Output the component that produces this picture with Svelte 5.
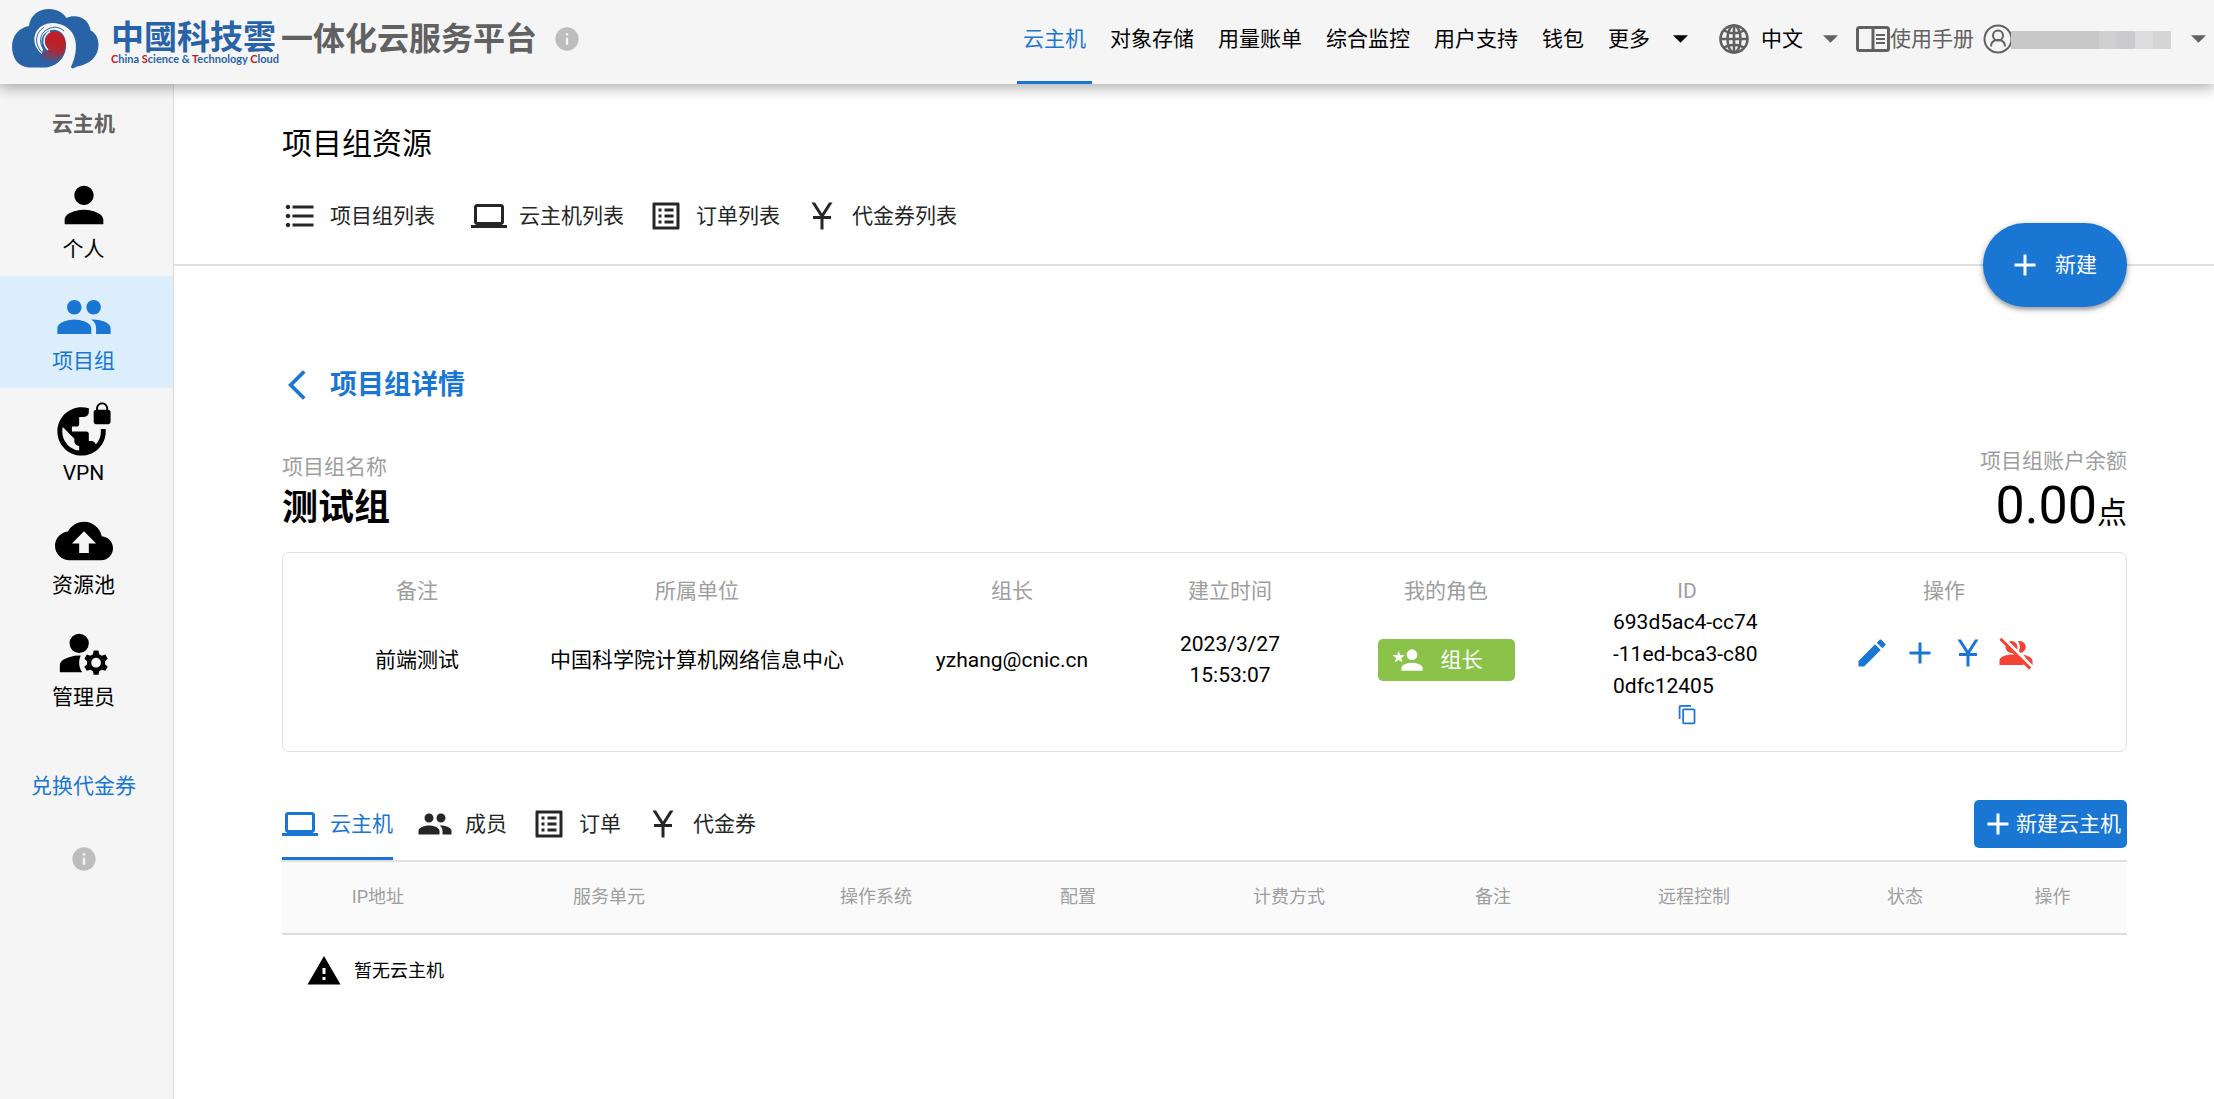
<script>
  const icons = {
    person: 'M12 12c2.21 0 4-1.79 4-4s-1.79-4-4-4-4 1.79-4 4 1.79 4 4 4zm0 2c-2.67 0-8 1.34-8 4v2h16v-2c0-2.66-5.33-4-8-4z',
    people: 'M16 11c1.66 0 2.99-1.34 2.99-3S17.66 5 16 5c-1.66 0-3 1.34-3 3s1.34 3 3 3zm-8 0c1.66 0 2.99-1.34 2.99-3S9.66 5 8 5C6.34 5 5 6.34 5 8s1.34 3 3 3zm0 2c-2.33 0-7 1.17-7 3.5V19h14v-2.5c0-2.33-4.67-3.5-7-3.5zm8 0c-.29 0-.62.02-.97.05 1.16.84 1.97 1.97 1.97 3.45V19h6v-2.5c0-2.33-4.67-3.5-7-3.5z',
    vpn: 'M22 4v-.5C22 2.12 20.88 1 19.5 1S17 2.12 17 3.5V4c-.55 0-1 .45-1 1v4c0 .55.45 1 1 1h5c.55 0 1-.45 1-1V5c0-.55-.45-1-1-1zm-.8 0h-3.4v-.5c0-.94.76-1.7 1.7-1.7s1.7.76 1.7 1.7V4zm-2.28 8c.04.33.08.66.08 1 0 2.08-.8 3.97-2.1 5.39-.26-.81-1-1.39-1.9-1.39h-1v-3c0-.55-.45-1-1-1H7v-2h2c.55 0 1-.45 1-1V7h2c1.1 0 2-.9 2-2V3.46c-.95-.3-1.95-.46-3-.46C5.48 3 1 7.48 1 13s4.48 10 10 10 10-4.48 10-10c0-.34-.02-.67-.05-1h-2.03zM10 20.93c-3.95-.49-7-3.85-7-7.93 0-.62.08-1.21.21-1.79L8 16v1c0 1.1.9 2 2 2v1.93z',
    backup: 'M19.35 10.04C18.67 6.59 15.64 4 12 4 9.11 4 6.6 5.64 5.35 8.04 2.34 8.36 0 10.91 0 14c0 3.31 2.69 6 6 6h13c2.76 0 5-2.24 5-5 0-2.64-2.05-4.78-4.65-4.96zM14 13v4h-4v-4H7l5-5 5 5h-3z',
    manage: 'M10 4a4 4 0 1 0 0 8 4 4 0 0 0 0-8zM10.67 13.02C10.45 13.01 10.23 13 10 13c-2.42 0-4.68.67-6.61 1.82C2.51 15.34 2 16.32 2 17.35V20h9.26C10.47 18.87 10 17.49 10 16c0-1.07.25-2.07.67-2.98zM20.75 16c0-.22-.03-.42-.06-.63l1.14-1.01-1-1.73-1.45.49c-.32-.27-.68-.48-1.08-.63L18 11h-2l-.3 1.49c-.4.15-.76.36-1.08.63l-1.45-.49-1 1.73 1.14 1.01c-.03.21-.06.41-.06.63s.03.42.06.63l-1.14 1.01 1 1.73 1.45-.49c.32.27.68.48 1.08.63L16 21h2l.3-1.49c.4-.15.76-.36 1.08-.63l1.45.49 1-1.73-1.14-1.01c.03-.21.06-.41.06-.63zM17 18c-1.1 0-2-.9-2-2s.9-2 2-2 2 .9 2 2-.9 2-2 2z',
    info: 'M12 2C6.48 2 2 6.48 2 12s4.48 10 10 10 10-4.48 10-10S17.52 2 12 2zm1 15h-2v-6h2v6zm0-8h-2V7h2v2z',
    list: 'M4 10.5c-.83 0-1.5.67-1.5 1.5s.67 1.5 1.5 1.5 1.5-.67 1.5-1.5-.67-1.5-1.5-1.5zm0-6c-.83 0-1.5.67-1.5 1.5S3.17 7.5 4 7.5 5.5 6.83 5.5 6 4.83 4.5 4 4.5zm0 12c-.83 0-1.5.68-1.5 1.5s.68 1.5 1.5 1.5 1.5-.68 1.5-1.5-.67-1.5-1.5-1.5zM7 19h14v-2H7v2zm0-6h14v-2H7v2zm0-8v2h14V5H7z',
    computer: 'M20 18c1.1 0 1.99-.9 1.99-2L22 6c0-1.1-.9-2-2-2H4c-1.1 0-2 .9-2 2v10c0 1.1.9 2 2 2H0v2h24v-2h-4zM4 6h16v10H4V6z',
    order: 'M19 5v14H5V5h14m1.1-2H3.9c-.5 0-.9.4-.9.9v16.2c0 .4.4.9.9.9h16.2c.4 0 .9-.5.9-.9V3.9c0-.5-.5-.9-.9-.9zM11 7h6v2h-6V7zm0 4h6v2h-6v-2zm0 4h6v2h-6zM7 7h2v2H7zm0 4h2v2H7zm0 4h2v2H7z',
    yuan: 'M13.28 12H18v2h-5v7h-2v-7H6v-2h4.72L5 3h2.37L12 10.29 16.63 3H19l-5.72 9z',
    edit: 'M3 17.25V21h3.75L17.81 9.94l-3.75-3.75L3 17.25zM20.71 7.04c.39-.39.39-1.02 0-1.41l-2.34-2.34c-.39-.39-1.02-.39-1.41 0l-1.83 1.83 3.75 3.75 1.83-1.83z',
    add: 'M19 13h-6v6h-2v-6H5v-2h6V5h2v6h6v2z',
    copy: 'M16 1H4c-1.1 0-2 .9-2 2v14h2V3h12V1zm3 4H8c-1.1 0-2 .9-2 2v14c0 1.1.9 2 2 2h11c1.1 0 2-.9 2-2V7c0-1.1-.9-2-2-2zm0 16H8V7h11v14z',
    warning: 'M1 21h22L12 2 1 21zm12-3h-2v-2h2v2zm0-4h-2v-4h2v4z',
    leader: 'M15 4a4 4 0 1 0 0 8 4 4 0 0 0 0-8zM15 14c-2.67 0-8 1.34-8 4v2h16v-2c0-2.66-5.33-4-8-4zM5 5.2l1.2 3 3.3.2-2.5 2.1.8 3.2L5 12l-2.8 1.7.8-3.2L.5 8.4l3.3-.2z'
  };

  const nav = ['云主机', '对象存储', '用量账单', '综合监控', '用户支持', '钱包'];
  const side = [
    { icon: 'person', label: '个人' },
    { icon: 'people', label: '项目组', active: true },
    { icon: 'vpn', label: 'VPN' },
    { icon: 'backup', label: '资源池' },
    { icon: 'manage', label: '管理员' }
  ];
  const tools = [
    { icon: 'list', label: '项目组列表', wide: true },
    { icon: 'computer', label: '云主机列表' },
    { icon: 'order', label: '订单列表' },
    { icon: 'yuan', label: '代金券列表' }
  ];
  const tabs = [
    { icon: 'computer', label: '云主机' },
    { icon: 'people', label: '成员' },
    { icon: 'order', label: '订单' },
    { icon: 'yuan', label: '代金券' }
  ];
  const detailHeads = ['备注', '所属单位', '组长', '建立时间', '我的角色', 'ID', '操作'];
  const hostHeads = ['IP地址', '服务单元', '操作系统', '配置', '计费方式', '备注', '远程控制', '状态', '操作'];
  let tab = $state('云主机');
</script>

{#snippet icon(name)}
  <svg class="icon" viewBox="0 0 24 24" aria-hidden="true"><path d={icons[name]} /></svg>
{/snippet}

{#snippet caret()}
  <svg class="caret" viewBox="7 10 10 5" aria-hidden="true"><path d="M7 10l5 5 5-5z" /></svg>
{/snippet}

<header>
  <a class="brand" href="#home" aria-label="中国科技云">
    <svg class="cloud" viewBox="0 0 88 60" aria-hidden="true">
      <defs>
        <linearGradient id="core" gradientUnits="userSpaceOnUse" x1="46" y1="34" x2="39" y2="55">
          <stop offset="0" stop-color="#bf1f26" />
          <stop offset="0.4" stop-color="#a52c3c" />
          <stop offset="1" stop-color="#2863a8" />
        </linearGradient>
      </defs>
      <path fill="#2863a8" d="M16 58.5C5 57 0 48 0 37.5C0 26 8 18.500 17 17C18 7 26 0 37 0C45 0 51 3.500 54.500 9C60 6 70 7 74.500 12.500C77 15.500 78.500 19 78.500 21.500C84 24 86.500 30 86.500 36C86.500 47 78 55.500 65 57.500L61 59.500L58 58C50 50 44 58.500 34 58.500Z" />
      <path fill="#f5f5f5" d="M30 45C20 37 20 24 29 17.500C39 11 53 14 60 23.500C66 32 65 46 58.500 59L40 60L35 58.500C48 56 55 46 54 34C53 25 47 20 40 21C31 22 27 31 31 40Z" />
      <path fill="url(#core)" d="M34 29C35 22 45 20 50.500 26C56 33 54 45 46 51C41 56 33 57 27 52C26 48 30 44 35 41C33 37 32.500 33 34 29Z" />
      <g fill="none" stroke="#2863a8" stroke-width="1">
        <path d="M33 46C22 38 22 24 32 18.500" />
        <path d="M34 43C26 36 27 24 36 20C42 17 48 18 52 22" />
      </g>
      <path fill="none" stroke="#f5f5f5" stroke-width="1.500" d="M36 41C30 35 31 26 38 22.500" />
    </svg>
    <span class="words">
      <span class="name">中國科技雲</span>
      <span class="latin"><b>C</b>hina <b>S</b>cience &amp; <b>T</b>echnology <b>C</b>loud</span>
    </span>
  </a>
  <span class="platform">一体化云服务平台</span>
  <button class="info head-info" aria-label="平台信息">{@render icon('info')}</button>

  <nav class="top" aria-label="主导航">
    {#each nav as label, i}
      <a href="#nav{i}" class:current={i === 0}>{label}</a>
    {/each}
    <button class="more" aria-haspopup="menu">更多{@render caret()}</button>
  </nav>

  <label class="lang">
    <svg class="globe" viewBox="0 0 30 30" aria-label="语言">
      <g fill="none" stroke="currentColor" stroke-width="2.600">
        <circle cx="15" cy="15" r="13.500" />
        <ellipse cx="15" cy="15" rx="6.500" ry="13.500" />
        <path d="M15 1.500v27M1.500 15h27M5 6.500c6 3.600 14 3.600 20 0M5 23.500c6-3.600 14-3.600 20 0" />
      </g>
    </svg>
    <select>
      <option>中文</option>
      <option>English</option>
    </select>
    {@render caret()}
  </label>

  <a class="manual" href="#manual">
    <svg class="book" viewBox="0 0 34 26" aria-hidden="true">
      <rect x="1.500" y="1.500" width="31" height="23" rx="2" fill="none" stroke="currentColor" stroke-width="3" />
      <path d="M17 1v24" stroke="currentColor" stroke-width="3" />
      <path d="M20 9h9M20 13h9M20 17h9" stroke="currentColor" stroke-width="2" />
    </svg>使用手册</a>

  <button class="user" aria-haspopup="menu" aria-label="用户">
    <svg class="avatar" viewBox="0 0 30 30" aria-hidden="true">
      <g fill="none" stroke="currentColor" stroke-width="2">
        <circle cx="15" cy="15" r="13.500" />
        <circle cx="15" cy="11.500" r="5" />
        <path d="M8 22.500c0-4.500 2.500-6.500 7-6.500s7 2 7 6.500" />
      </g>
    </svg>
    <span class="mosaic"><i></i><i></i><i></i><i></i><i></i></span>
    {@render caret()}
  </button>
</header>

<div class="body">
  <aside>
    <h2>云主机</h2>
    {#each side as item, i}
      <a class="entry" href="#side{i}" class:current={item.active}>
        {@render icon(item.icon)}
        <span>{item.label}</span>
      </a>
    {/each}
    <a class="redeem" href="#redeem">兑换代金券</a>
    <button class="info" aria-label="帮助">{@render icon('info')}</button>
  </aside>

  <main>
    <section class="resources">
      <h1>项目组资源</h1>
      <div class="tools">
        {#each tools as item, i}
          <a href="#tool{i}" class:wide={item.wide}>{@render icon(item.icon)}{item.label}</a>
        {/each}
      </div>
      <button class="create">{@render icon('add')}新建</button>
    </section>

    <section class="detail">
      <button class="back">
        <svg viewBox="0 0 12 24" aria-hidden="true"><path d="M11.670 3.870 9.900 2.100 0 12l9.900 9.900 1.770-1.770L3.540 12z" /></svg>
        项目组详情
      </button>

      <div class="summary">
        <div class="group">
          <div class="caption">项目组名称</div>
          <div class="group-name">测试组</div>
        </div>
        <div class="balance">
          <div class="caption">项目组账户余额</div>
          <div class="amount">0.00<small>点</small></div>
        </div>
      </div>

      <div class="card">
        <table class="info-table">
          <colgroup>{#each detailHeads as _}<col />{/each}</colgroup>
          <thead>
            <tr>{#each detailHeads as head}<th>{head}</th>{/each}</tr>
          </thead>
          <tbody>
            <tr>
              <td>前端测试</td>
              <td>中国科学院计算机网络信息中心</td>
              <td>yzhang@cnic.cn</td>
              <td>2023/3/27<br />15:53:07</td>
              <td><button class="role">{@render icon('leader')}组长</button></td>
              <td class="id">
                <div class="uuid">693d5ac4-cc74-11ed-bca3-c800dfc12405</div>
                <button class="copy" aria-label="复制">{@render icon('copy')}</button>
              </td>
              <td class="ops">
                <div>
                  <button aria-label="编辑">{@render icon('edit')}</button>
                  <button aria-label="添加">{@render icon('add')}</button>
                  <button aria-label="代金券">{@render icon('yuan')}</button>
                  <button class="danger" aria-label="解散">
                    <svg class="icon" viewBox="0 0 24 24" aria-hidden="true">
                      <defs>
                        <mask id="slash">
                          <rect width="24" height="24" fill="#fff" />
                          <path d="M2 0.500L24 22.500" stroke="#000" stroke-width="2.200" />
                        </mask>
                      </defs>
                      <g mask="url(#slash)">
                        <path d="M9 4a4 4 0 1 0 0 8 4 4 0 0 0 0-8zM9 13c-2.700 0-8 1.340-8 4v3h16v-3c0-2.660-5.300-4-8-4z" />
                        <path d="M14.500 12a4 4 0 0 0 0-8c-.500 0-.900.100-1.300.200a6 6 0 0 1 0 7.600c.400.100.800.200 1.300.200zM16.500 13.100c1.400.900 2.300 2.100 2.300 3.900v3H23v-3c0-2-3.300-3.400-6.500-3.900z" />
                      </g>
                      <path d="M2.300 1.800L.900 3.200 20.800 23.100l1.400-1.400z" />
                    </svg>
                  </button>
                </div>
              </td>
            </tr>
          </tbody>
        </table>
      </div>

      <div class="tabbar">
        <div class="tabs" role="tablist">
          {#each tabs as item}
            <button
              role="tab"
              aria-selected={tab === item.label}
              class:current={tab === item.label}
              onclick={() => (tab = item.label)}>{@render icon(item.icon)}{item.label}</button>
          {/each}
        </div>
        <button class="new-host">{@render icon('add')}新建云主机</button>
      </div>

      <table class="host-table">
        <colgroup>{#each hostHeads as _}<col />{/each}</colgroup>
        <thead>
          <tr>{#each hostHeads as head}<th>{head}</th>{/each}</tr>
        </thead>
        <tbody>
          <tr>
            <td colspan="9"><div class="empty">{@render icon('warning')}暂无云主机</div></td>
          </tr>
        </tbody>
      </table>
    </section>
  </main>
</div>

<style>
  :global(body) {
    margin: 0;
    background: #fff;
  }
  :global(#app) {
    display: flex;
    flex-direction: column;
    min-height: 100vh;
    font-family: Roboto, 'Noto Sans CJK SC', sans-serif;
    font-size: 21px;
    line-height: 30px;
    color: #000;
  }
  button,
  select {
    margin: 0;
    padding: 0;
    border: 0;
    background: none;
    font: inherit;
    color: inherit;
    cursor: pointer;
  }
  a {
    color: inherit;
    text-decoration: none;
  }
  svg {
    display: block;
    flex: none;
    fill: currentColor;
  }
  .icon {
    width: 36px;
    height: 36px;
  }
  .caret {
    width: 15px;
    height: 8px;
  }
  h1,
  h2 {
    margin: 0;
  }

  header {
    position: relative;
    z-index: 2;
    display: flex;
    align-items: center;
    box-sizing: border-box;
    height: 84px;
    padding: 0 8px 6px 12px;
    background: #f5f5f5;
    color: #616161;
    white-space: nowrap;
    box-shadow: 0 0 15px 3px rgba(0, 0, 0, 0.2), 0 0 15px rgba(0, 0, 0, 0.24);
  }
  .brand {
    display: flex;
    align-items: center;
    gap: 11px;
    color: #2863a8;
  }
  .cloud {
    width: 88px;
    height: 60px;
  }
  .words {
    display: flex;
    flex-direction: column;
    padding-top: 6px;
  }
  .name {
    font-family: 'Noto Sans CJK TC', sans-serif;
    font-size: 33px;
    font-weight: 700;
    line-height: 34px;
  }
  .latin {
    font-family: Lato, sans-serif;
    font-size: 11px;
    font-weight: 700;
    line-height: 14px;
  }
  .latin b {
    font-weight: 700;
    color: #c4161c;
  }
  .platform {
    margin-left: 2px;
    font-size: 32px;
    font-weight: 700;
    line-height: 40px;
  }
  .info {
    color: #bdbdbd;
  }
  .info .icon {
    width: 28px;
    height: 28px;
  }
  .head-info {
    margin-left: 16px;
  }
  .top {
    display: flex;
    gap: 12px;
    margin-left: auto;
    margin-bottom: -6px;
    color: #000;
  }
  .top > * {
    box-sizing: border-box;
    height: 84px;
    padding: 24px 6px 27px;
    border-bottom: 3px solid transparent;
  }
  .top > .current {
    color: #1976d2;
    border-color: #1976d2;
  }
  .more {
    display: flex;
    align-items: center;
    gap: 23px;
  }
  .lang {
    display: flex;
    align-items: center;
    margin-left: 25px;
  }
  .globe,
  .avatar {
    width: 30px;
    height: 30px;
  }
  .lang select {
    appearance: none;
    field-sizing: content;
    margin: 0 20px 0 12px;
    color: #000;
  }
  .manual {
    display: flex;
    align-items: center;
    margin-left: 18px;
  }
  .book {
    width: 34px;
    height: 26px;
  }
  .user {
    display: flex;
    align-items: center;
    margin-left: 9px;
  }
  .mosaic {
    display: flex;
    width: 160px;
    height: 18px;
    margin: 2px 20px 0 -2px;
  }
  .mosaic i {
    flex: 18;
    background: #d5d5d5;
  }
  .mosaic i:nth-child(1) {
    flex: 88;
    background: #c8c8c8;
  }
  .mosaic i:nth-child(2) {
    background: #cfcfd0;
  }
  .mosaic i:nth-child(3) {
    background: #cbcbcd;
  }
  .mosaic i:nth-child(4) {
    background: #dcdcdc;
  }

  .body {
    display: flex;
    flex: 1;
  }
  aside {
    display: flex;
    flex: none;
    flex-direction: column;
    align-items: center;
    box-sizing: border-box;
    width: 174px;
    padding-top: 25px;
    padding-right: 6px;
    border-right: 1px solid #dcdcdc;
    background: #f5f5f5;
  }
  aside h2 {
    margin-bottom: 25px;
    font-size: 21px;
    font-weight: 700;
    color: #616161;
  }
  .entry {
    display: flex;
    flex-direction: column;
    align-items: center;
    align-self: stretch;
    margin-right: -6px;
    padding: 12px 6px 12px 0;
  }
  .entry .icon {
    width: 58px;
    height: 58px;
  }
  .entry.current {
    background: #dceefc;
    color: #1976d2;
  }
  .redeem {
    margin: 47px 0 44px;
    color: #1976d2;
  }

  main {
    flex: 1;
    min-width: 0;
  }
  .resources {
    position: relative;
    padding: 38px 87px 30px 108px;
    border-bottom: 2px solid #e0e0e0;
  }
  h1 {
    font-size: 30px;
    font-weight: 400;
    line-height: 44px;
  }
  .tools {
    display: flex;
    gap: 24px;
    margin-top: 32px;
    color: #262626;
  }
  .tools a {
    display: flex;
    align-items: center;
    gap: 12px;
  }
  .tools .wide {
    margin-right: 12px;
  }
  .create {
    position: absolute;
    right: 87px;
    bottom: -43px;
    display: flex;
    align-items: center;
    gap: 12px;
    height: 84px;
    padding: 0 30px 0 24px;
    border-radius: 42px;
    background: #1976d2;
    color: #fff;
    box-shadow: 0 2px 7px rgba(0, 0, 0, 0.3), 0 3px 3px rgba(0, 0, 0, 0.16);
  }

  .detail {
    padding: 99px 87px 40px 108px;
  }
  .back {
    display: flex;
    align-items: center;
    gap: 24px;
    padding-left: 6px;
    font-size: 27px;
    font-weight: 700;
    line-height: 40px;
    color: #1976d2;
  }
  .back svg {
    width: 18px;
    height: 36px;
  }
  .summary {
    display: flex;
    justify-content: space-between;
    margin-top: 41px;
  }
  .caption {
    color: #9e9e9e;
  }
  .group {
    padding-top: 6px;
  }
  .group-name {
    font-size: 36px;
    font-weight: 700;
    line-height: 52px;
  }
  .balance {
    text-align: right;
  }
  .amount {
    font-size: 52px;
    line-height: 60px;
  }
  .amount small {
    font-size: 30px;
    line-height: 30px;
  }

  .card {
    margin-top: 16px;
    padding: 23px 18px 21px 19px;
    border: 1px solid #e0e0e0;
    border-radius: 7px;
  }
  table {
    width: 100%;
    table-layout: fixed;
    border-collapse: collapse;
    text-align: center;
  }
  th,
  td {
    padding: 0;
  }
  th {
    font-weight: 400;
    color: #9e9e9e;
  }
  .info-table col:nth-child(1) { width: 230px; }
  .info-table col:nth-child(2) { width: 330px; }
  .info-table col:nth-child(3) { width: 300px; }
  .info-table col:nth-child(4) { width: 136px; }
  .info-table col:nth-child(5) { width: 296px; }
  .info-table col:nth-child(6) { width: 186px; }
  .info-table col:nth-child(7) { width: 328px; }
  .info-table td {
    padding-bottom: 16px;
    line-height: 31px;
  }
  .role {
    display: flex;
    align-items: center;
    gap: 17px;
    height: 42px;
    margin: 0 auto;
    padding: 0 32px 0 14px;
    border-radius: 5px;
    background: #8bc34a;
    color: #fff;
  }
  .role .icon {
    width: 32px;
    height: 32px;
  }
  .info-table .id {
    padding-bottom: 0;
  }
  .uuid {
    width: 150px;
    margin: 0 auto;
    padding-left: 2px;
    line-height: 32px;
    text-align: left;
    word-break: break-all;
  }
  .copy {
    display: block;
    margin: 2px auto 5px;
    color: #1976d2;
  }
  .copy .icon {
    width: 21px;
    height: 21px;
  }
  .info-table .ops {
    padding-bottom: 30px;
  }
  .ops div {
    display: flex;
    justify-content: center;
    gap: 12px;
    color: #1976d2;
  }
  .ops .danger {
    color: #f44336;
  }

  .tabbar {
    display: flex;
    align-items: center;
    justify-content: space-between;
    margin-top: 36px;
    border-bottom: 2px solid #e0e0e0;
  }
  .tabs {
    display: flex;
    gap: 24px;
    color: #262626;
  }
  .tabs button {
    display: flex;
    align-items: center;
    gap: 12px;
    box-sizing: border-box;
    height: 72px;
    border-top: 3px solid transparent;
    border-bottom: 3px solid transparent;
  }
  .tabs .current {
    color: #1976d2;
    border-bottom-color: #1976d2;
  }
  .new-host {
    display: flex;
    align-items: center;
    height: 48px;
    padding: 0 6px;
    border-radius: 5px;
    background: #1976d2;
    color: #fff;
  }
  .host-table {
    font-size: 18px;
  }
  .host-table col:nth-child(1) { width: 192px; }
  .host-table col:nth-child(2) { width: 270px; }
  .host-table col:nth-child(3) { width: 264px; }
  .host-table col:nth-child(4) { width: 140px; }
  .host-table col:nth-child(5) { width: 282px; }
  .host-table col:nth-child(6) { width: 126px; }
  .host-table col:nth-child(7) { width: 276px; }
  .host-table col:nth-child(8) { width: 146px; }
  .host-table col:nth-child(9) { width: 149px; }
  .host-table th {
    box-sizing: border-box;
    height: 72px;
    padding-bottom: 1px;
    border-bottom: 2px solid #dcdcdc;
    background: #fafafa;
  }
  .empty {
    display: flex;
    align-items: center;
    gap: 12px;
    padding: 18px 24px;
  }
</style>
